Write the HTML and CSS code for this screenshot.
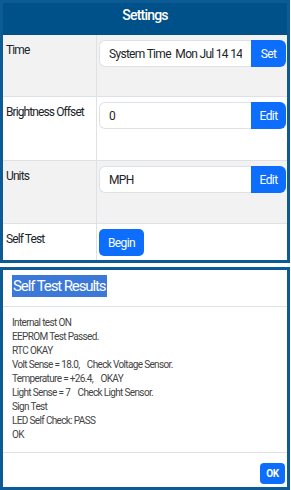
FILE: index.html
```html
<!DOCTYPE html>
<html lang="en">
<head>
    <meta charset="UTF-8">
    <meta name="viewport" content="width=device-width, initial-scale=1.0">
    <title>Settings</title>
    <link rel="stylesheet" href="styles.css">
</head>
<body>
    <div class="panel settings">
        <div class="panel-head">Settings</div>

        <div class="row shaded tall">
            <div class="cell label">Time</div>
            <div class="cell value">
                <div class="input-group">
                    <input class="field" type="text" value="System Time  Mon Jul 14 14:48:02 2025" readonly>
                    <button class="btn btn-append">Set</button>
                </div>
            </div>
        </div>

        <div class="row tall">
            <div class="cell label">Brightness Offset</div>
            <div class="cell value">
                <div class="input-group">
                    <input class="field" type="text" value="0" readonly>
                    <button class="btn btn-append">Edit</button>
                </div>
            </div>
        </div>

        <div class="row shaded tall">
            <div class="cell label">Units</div>
            <div class="cell value">
                <div class="input-group">
                    <input class="field" type="text" value="MPH" readonly>
                    <button class="btn btn-append">Edit</button>
                </div>
            </div>
        </div>

        <div class="row last">
            <div class="cell label">Self Test</div>
            <div class="cell value">
                <button class="btn btn-begin">Begin</button>
            </div>
        </div>
    </div>

    <div class="panel results">
        <div class="results-head">
            <span class="results-title">Self Test Results</span>
        </div>
        <div class="results-body">Internal test ON
EEPROM Test Passed.
RTC OKAY
Volt Sense = 18.0,    Check Voltage Sensor.
Temperature = +26.4,    OKAY
Light Sense = 7    Check Light Sensor.
Sign Test
LED Self Check: PASS
OK</div>
        <div class="results-foot">
            <button class="btn btn-ok">OK</button>
        </div>
    </div>
</body>
</html>
```

FILE: styles.css
```css
* {
    box-sizing: border-box;
}

body {
    margin: 0;
    font-family: 'Roboto', 'Liberation Sans', sans-serif;
    color: #212529;
    background: #fff;
}

.panel {
    width: 290px;
    border: 3px solid #0d5b94;
    background: #fff;
}

/* settings table */
.panel-head {
    height: 32px;
    padding-bottom: 8px;
    background: #00508a;
    color: #fff;
    font-size: 14px;
    font-weight: 500;
    line-height: 24px;
    text-align: center;
    letter-spacing: -0.8px;
}

.row {
    display: grid;
    grid-template-columns: 94px minmax(0, 1fr);
    border-bottom: 1px solid #dee2e6;
}

.row.tall:nth-of-type(2) {
    height: 62px;
}

.row.tall:nth-of-type(3) {
    height: 64px;
}

.row.tall:nth-of-type(4) {
    height: 63px;
}

.row.last {
    height: 36px;
    border-bottom: none;
}

.row.shaded {
    background: #f2f2f2;
}

.cell.label {
    padding: 8px 3px 0;
    border-right: 1px solid #dee2e6;
    font-size: 12px;
    line-height: 14px;
    letter-spacing: -0.9px;
}

.cell.value {
    min-width: 0;
    padding: 5px 1px 0 2px;
}

.input-group {
    display: flex;
    height: 27px;
}

.field {
    flex: 1;
    width: 0;
    min-width: 0;
    height: 100%;
    padding: 0 9px;
    border: 1px solid #dee2e6;
    border-right: none;
    border-radius: 6px 0 0 6px;
    background: #fff;
    color: #212529;
    font-family: inherit;
    font-size: 12px;
    letter-spacing: -0.7px;
    outline: none;
}

.btn {
    border: none;
    background: #0d6efd;
    color: #fff;
    font-family: inherit;
    font-size: 12px;
    letter-spacing: -0.6px;
    cursor: pointer;
    padding: 0;
}

.btn-append {
    width: 35px;
    flex: none;
    border-radius: 0 6px 6px 0;
}

.btn-begin {
    width: 45px;
    height: 27px;
    border-radius: 5px;
}

/* results dialog */
.results {
    margin-top: 4px;
    height: 223px;
}

.results-head {
    height: 37px;
    padding: 5px 0 0 9px;
    border-bottom: 1px solid #dee2e6;
}

.results-title {
    display: inline-block;
    padding: 0 1px;
    background: #3b78d8;
    color: #fff;
    font-size: 15px;
    line-height: 22px;
    letter-spacing: -1.1px;
}

.results-body {
    height: 146px;
    padding: 9px 9px 0;
    border-bottom: 1px solid #dee2e6;
    color: #444;
    font-size: 10px;
    line-height: 14px;
    letter-spacing: -0.65px;
    white-space: pre;
}

.results-foot {
    display: flex;
    justify-content: flex-end;
    padding: 10px 2px 0 0;
}

.btn-ok {
    width: 25px;
    height: 21px;
    border-radius: 4px;
    font-size: 10px;
    font-weight: 700;
    letter-spacing: -0.3px;
}
```
